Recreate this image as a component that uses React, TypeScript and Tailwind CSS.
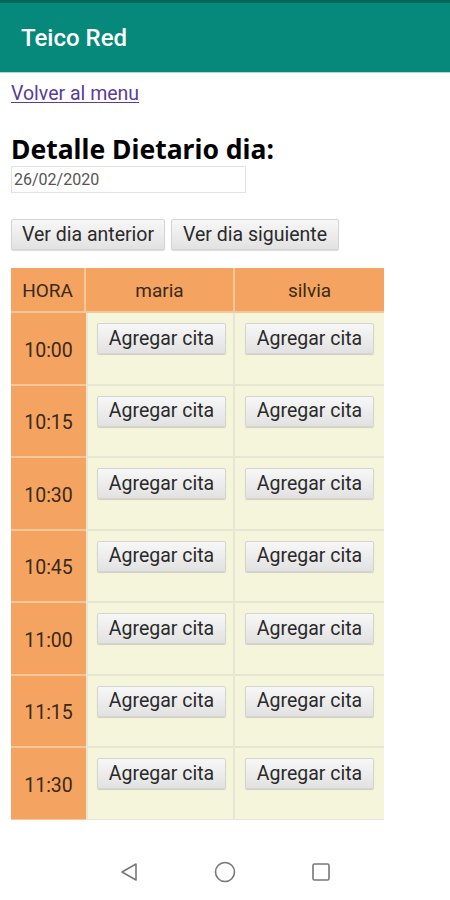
const hours = ['10:00', '10:15', '10:30', '10:45', '11:00', '11:15', '11:30'];
const people = ['maria', 'silvia'];

function GrayButton({ label, className = '' }: { label: string; className?: string }) {
  return (
    <button
      type="button"
      className={`h-[31px] rounded-[2px] border border-[#d4d4d4] bg-gradient-to-b from-[#f7f7f7] to-[#e2e2e2] text-[19.5px] text-[#2a2a2a] leading-none shadow-[0_1px_1px_rgba(0,0,0,0.15)] ${className}`}
    >
      {label}
    </button>
  );
}

export default function App() {
  return (
    <div className="flex h-[900px] w-[450px] flex-col bg-white font-['Roboto',sans-serif]">
      <header className="flex h-[73px] shrink-0 flex-col">
        <div className="h-[3px] bg-[#00695c]" />
        <div className="flex flex-1 items-center bg-[#06897a] pl-[21px]">
          <h1 className="text-[24px] font-medium text-white">Teico Red</h1>
        </div>
        <div className="h-[1px] bg-[#b7d9d3]" />
      </header>

      <main className="h-[747px] shrink-0 overflow-hidden px-[11px]">
        <a href="#" className="mt-[10px] block text-[19.5px] leading-[22px] text-[#5b3c99] underline underline-offset-2">
          Volver al menu
        </a>
        <h2 className="mt-[28px] text-[26.5px] font-bold leading-[33px] text-black font-['Noto_Sans',sans-serif]">
          Detalle Dietario dia:
        </h2>
        <div className="flex h-[27px] w-[235px] items-center border border-[#e2e2e2] px-[2px] text-[16px] text-[#555]">
          26/02/2020
        </div>

        <div className="mt-[26px] flex gap-[6px]">
          <GrayButton label="Ver dia anterior" className="w-[154px]" />
          <GrayButton label="Ver dia siguiente" className="w-[168px]" />
        </div>

        <div className="mt-[18px] grid w-[373px] grid-cols-[75px_149px_149px]">
          <div className="flex h-[45px] items-center justify-center border-r-2 border-b-2 border-[#f7c79c] bg-[#f4a460] pt-[3px] text-[19px] text-[#3a2a1a]">
            HORA
          </div>
          {people.map((p, i) => (
            <div
              key={p}
              className={`flex h-[45px] items-center justify-center border-b-2 border-[#f7c79c] bg-[#f4a460] pt-[3px] text-[19px] text-[#3a2a1a] ${i === 0 ? 'border-r-2' : ''}`}
            >
              {p}
            </div>
          ))}
          {hours.map((h) => (
            <div key={h} className="contents">
              <div className="flex h-[72.5px] items-center justify-center border-b-2 border-[#f7c79c] bg-[#f4a460] pt-[4px] text-[19.5px] text-[#3a2a1a]">
                {h}
              </div>
              {people.map((p, i) => (
                <div
                  key={p}
                  className={`h-[72.5px] border-b-2 border-[#e7e6d2] bg-[#f5f5dc] pt-[10px] ${i === 0 ? 'border-x-2 pl-[9px]' : 'pl-[10px]'}`}
                >
                  <GrayButton label="Agregar cita" className="w-[129px]" />
                </div>
              ))}
            </div>
          ))}
        </div>
      </main>

      <nav className="flex flex-1 items-start justify-center gap-[75px] pt-[42px]">
        <svg width="20" height="20" viewBox="0 0 20 20" fill="none" stroke="#777" strokeWidth="1.6">
          <path d="M17 2 L3 10 L17 18 Z" strokeLinejoin="round" />
        </svg>
        <svg width="22" height="22" viewBox="0 0 22 22" fill="none" stroke="#777" strokeWidth="1.6" className="-mt-[1px]">
          <circle cx="11" cy="11" r="9.5" />
        </svg>
        <svg width="20" height="20" viewBox="0 0 20 20" fill="none" stroke="#777" strokeWidth="1.6">
          <rect x="2" y="2" width="16" height="16" rx="1.5" />
        </svg>
      </nav>
    </div>
  );
}
